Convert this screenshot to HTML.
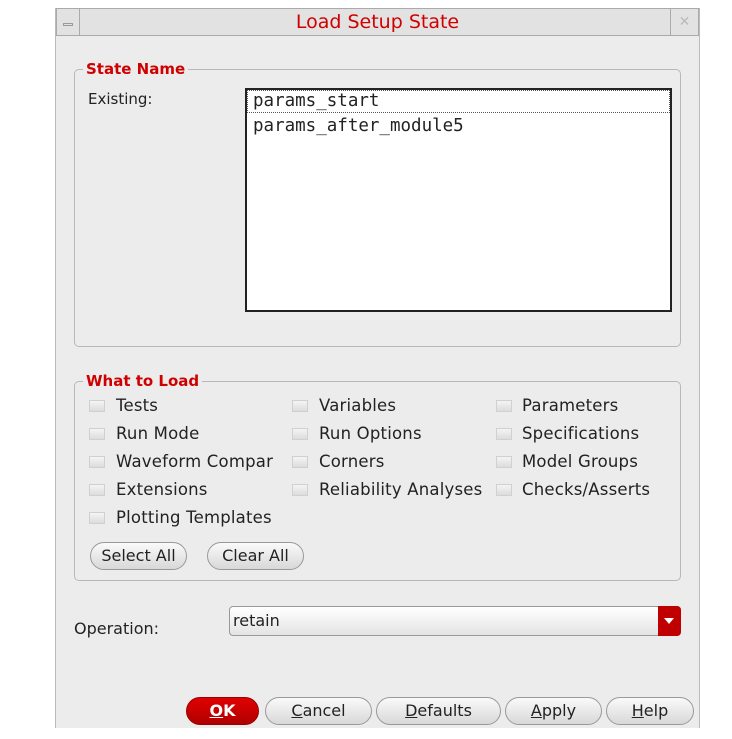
<!DOCTYPE html>
<html><head><meta charset="utf-8"><style>
*{box-sizing:border-box;margin:0;padding:0}
body{width:732px;height:739px;background:#fff;position:relative;font-family:"DejaVu Sans","Liberation Sans",sans-serif;font-size:15px;color:#222;overflow:hidden}
.win{position:absolute;left:55px;top:8px;width:645px;height:720px;background:#ececec;border-left:1px solid #bbb;border-right:1px solid #bbb}
.a{position:absolute}
.title{left:0;top:0;width:643px;height:28px;background:#e2e2e2;border:1px solid #aaa}
.grp{border:1px solid #b8b8b8;border-radius:5px}
.lg{background:#ececec;color:#d00000;font-weight:bold;font-size:15px;padding:0 3px;line-height:18px}
.cb{width:16px;height:12px;background:linear-gradient(#f4f4f4,#dcdcdc);border:1px solid #d0d0d0}
.t{font-size:16.5px;letter-spacing:0.2px}
.btn{height:28px;border:1px solid #999;border-radius:14px;background:linear-gradient(#fafafa,#d8d8d8);text-align:center;line-height:26px;font-size:16px;color:#222}
u{text-decoration:underline}
</style></head><body>
<div class="win">
 <div class="a title"></div>
 <div class="a" style="left:0;top:0;width:24px;height:28px;border:1px solid #aaa;background:#e2e2e2"><div class="a" style="left:6px;top:14px;width:10px;height:3px;border:1px solid #999"></div></div>
 <div class="a" style="left:614px;top:0;width:29px;height:28px;border:1px solid #aaa;background:#e2e2e2;color:#bbb;text-align:center;line-height:26px;font-size:14px">✕</div>
 <div class="a" style="left:0;top:2px;width:643px;text-align:center;color:#d00000;font-size:19px;line-height:24px">Load Setup State</div>

 <div class="a grp" style="left:18px;top:61px;width:607px;height:278px"></div>
 <div class="a lg" style="left:27px;top:52px">State Name</div>
 <div class="a" style="left:32px;top:82px">Existing:</div>
 <div class="a" style="left:189px;top:80px;width:427px;height:224px;background:#fff;border:2px solid #222;font-family:'DejaVu Sans Mono','Liberation Mono',monospace;font-size:17.5px">
  <div style="border:1px dotted #555;height:23px;line-height:21px;padding-left:5px">params_start</div>
  <div style="line-height:26px;padding-left:6px">params_after_module5</div>
 </div>

 <div class="a grp" style="left:18px;top:373px;width:607px;height:200px"></div>
 <div class="a lg" style="left:27px;top:364px">What to Load</div>

 <div class="a cb" style="left:33px;top:392px"></div><div class="a t" style="left:60px;top:388px">Tests</div>
 <div class="a cb" style="left:33px;top:420px"></div><div class="a t" style="left:60px;top:416px">Run Mode</div>
 <div class="a cb" style="left:33px;top:448px"></div><div class="a t" style="left:60px;top:444px">Waveform Compar</div>
 <div class="a cb" style="left:33px;top:476px"></div><div class="a t" style="left:60px;top:472px">Extensions</div>
 <div class="a cb" style="left:33px;top:504px"></div><div class="a t" style="left:60px;top:500px">Plotting Templates</div>

 <div class="a cb" style="left:236px;top:392px"></div><div class="a t" style="left:263px;top:388px">Variables</div>
 <div class="a cb" style="left:236px;top:420px"></div><div class="a t" style="left:263px;top:416px">Run Options</div>
 <div class="a cb" style="left:236px;top:448px"></div><div class="a t" style="left:263px;top:444px">Corners</div>
 <div class="a cb" style="left:236px;top:476px"></div><div class="a t" style="left:263px;top:472px">Reliability Analyses</div>

 <div class="a cb" style="left:440px;top:392px"></div><div class="a t" style="left:466px;top:388px">Parameters</div>
 <div class="a cb" style="left:440px;top:420px"></div><div class="a t" style="left:466px;top:416px">Specifications</div>
 <div class="a cb" style="left:440px;top:448px"></div><div class="a t" style="left:466px;top:444px">Model Groups</div>
 <div class="a cb" style="left:440px;top:476px"></div><div class="a t" style="left:466px;top:472px">Checks/Asserts</div>

 <div class="a btn" style="left:34px;top:534px;width:97px">Select All</div>
 <div class="a btn" style="left:151px;top:534px;width:97px">Clear All</div>

 <div class="a" style="left:18px;top:611px;font-size:16px">Operation:</div>
 <div class="a" style="left:173px;top:598px;width:452px;height:30px;border:1px solid #999;border-radius:4px;background:linear-gradient(#fff,#e4e4e4);padding-left:3px;line-height:28px;font-size:16px">retain
  <div class="a" style="right:-1px;top:-1px;width:23px;height:30px;background:#c00000;border-radius:0 4px 4px 0"><div class="a" style="left:6px;top:12px;border-left:5px solid transparent;border-right:5px solid transparent;border-top:6px solid #fff"></div></div>
 </div>

 <div class="a btn" style="left:130px;top:689px;width:73px;background:linear-gradient(#e00000,#b00000);border-color:#900;color:#fff;font-weight:bold"><u>O</u>K</div>
 <div class="a btn" style="left:209px;top:689px;width:107px"><u>C</u>ancel</div>
 <div class="a btn" style="left:320px;top:689px;width:125px"><u>D</u>efaults</div>
 <div class="a btn" style="left:449px;top:689px;width:97px"><u>A</u>pply</div>
 <div class="a btn" style="left:550px;top:689px;width:88px"><u>H</u>elp</div>
</div>
</body></html>
